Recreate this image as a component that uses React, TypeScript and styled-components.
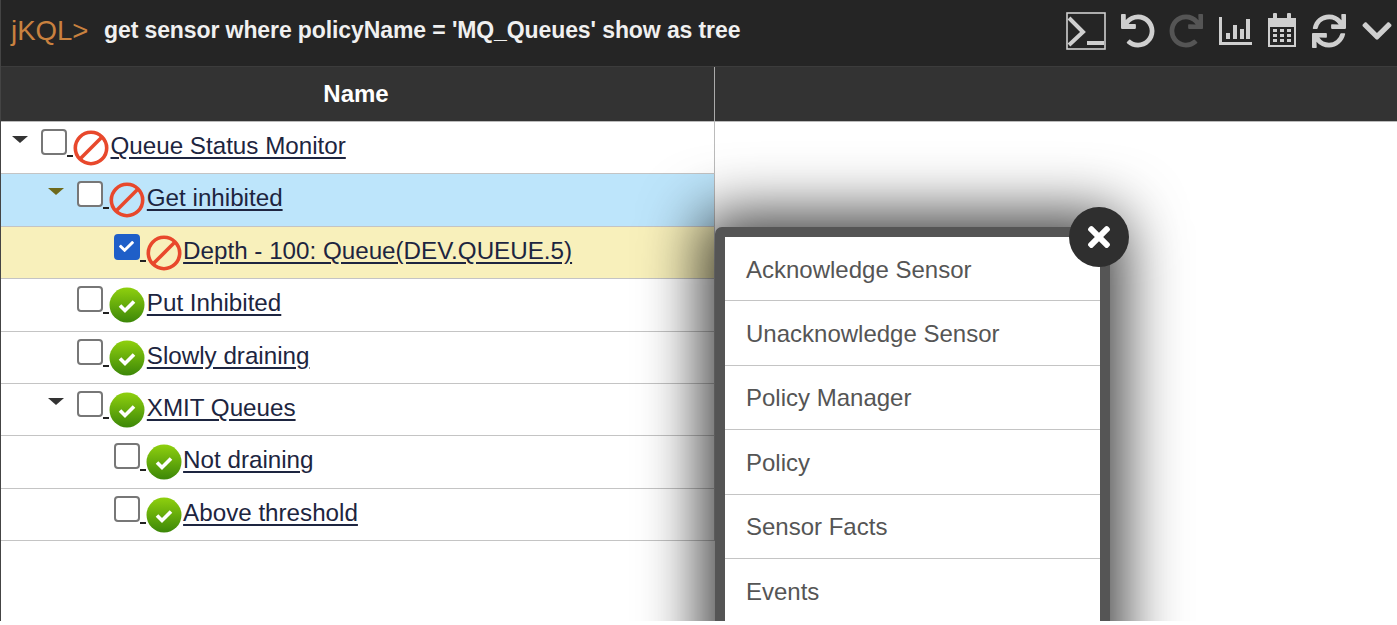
import React from "react";
import styled, { createGlobalStyle } from "styled-components";
import { FaUndo, FaRedo, FaSync, FaChevronDown, FaCheck, FaTimes } from "react-icons/fa";

const GlobalStyle = createGlobalStyle`
  html, body {
    margin: 0;
    padding: 0;
    background: #fff;
    overflow: hidden;
  }
  * { box-sizing: border-box; }
`;

const Page = styled.div`
  position: relative;
  width: 1397px;
  height: 621px;
  overflow: hidden;
  background: #fff;
  border-left: 1px solid #444;
  font-family: "Liberation Sans", Arial, sans-serif;
`;

const Toolbar = styled.div`
  display: flex;
  align-items: center;
  height: 66px;
  padding: 0 3px 5px 10px;
  background: #252525;
`;

const Prompt = styled.span`
  font-size: 27.6px;
  color: #c9813f;
  width: 93px;
`;

const Query = styled.span`
  flex: 1;
  font-size: 23px;
  font-weight: 700;
  color: #f0f0f0;
  letter-spacing: -0.1px;
`;

const Tools = styled.div`
  display: flex;
  align-items: center;
  gap: 14.5px;
`;

const Tool = styled.span<{ $disabled?: boolean }>`
  display: flex;
  color: ${({ $disabled }) => ($disabled ? "#555" : "#cfcfcf")};
  font-size: 34px;
`;

const HeaderRow = styled.div`
  display: flex;
  height: 56px;
  background: #333;
  border-top: 1px solid #3c3c3c;
  border-bottom: 1px solid #bbb;
`;

const NameHeader = styled.div`
  display: flex;
  align-items: center;
  justify-content: center;
  width: 714px;
  padding: 0 3px 1px 0;
  border-right: 1px solid #aaa;
  font-size: 24px;
  font-weight: 700;
  color: #fff;
`;

const Tree = styled.div`
  width: 714px;
`;

const Row = styled.div<{ $level: number; $state?: "selected" | "checked" }>`
  display: flex;
  align-items: flex-start;
  height: 52.4px;
  padding-top: 7px;
  padding-left: ${({ $level }) => 40 + $level * 36.3}px;
  position: relative;
  background: ${({ $state }) =>
    $state === "selected" ? "#bde5fb" : $state === "checked" ? "#f8f0bb" : "#fff"};
  border-right: 1px solid #bbb;
  border-bottom: 1px solid #c4c4c4;
`;

const Caret = styled.span<{ $level: number; $state?: string }>`
  position: absolute;
  left: ${({ $level }) => 11 + $level * 36.3}px;
  top: 14px;
  width: 0;
  height: 0;
  border-left: 8px solid transparent;
  border-right: 8px solid transparent;
  border-top: 7px solid ${({ $state }) => ($state === "selected" ? "#6e6a1c" : "#333")};
`;

const Check = styled.span<{ $checked?: boolean }>`
  display: flex;
  align-items: center;
  justify-content: center;
  flex: none;
  width: 26px;
  height: 26px;
  border-radius: 4px;
  border: 2px solid ${({ $checked }) => ($checked ? "#1f5fc8" : "#777")};
  background: ${({ $checked }) => ($checked ? "#1f5fc8" : "#fff")};
  color: #fff;
  font-size: 15px;
`;

const Spacer = styled.span`
  flex: none;
  width: 6px;
  height: 2px;
  margin-top: 26px;
  background: #222;
`;

const StatusIcon = styled.svg`
  flex: none;
  width: 36px;
  height: 36px;
  margin-top: 1px;
`;

const SensorLink = styled.a`
  margin: 4px 0 0 1.5px;
  font-size: 24.2px;
  line-height: 26px;
  color: #1d2540;
  text-decoration: underline;
  text-underline-offset: 3px;
`;

const Menu = styled.div`
  position: absolute;
  left: 714px;
  top: 227px;
  width: 395px;
  height: 460px;
  border: 10px solid #555;
  border-radius: 7px;
  background: #fff;
  box-shadow: 0 0 60px 14px rgba(0, 0, 0, 0.75);
`;

const MenuItem = styled.div`
  display: flex;
  align-items: center;
  height: 64.4px;
  padding: 2px 0 0 21px;
  font-size: 24px;
  color: #555;
  border-bottom: 1px solid #c4c4c4;
`;

const CloseButton = styled.span`
  position: absolute;
  left: 1068px;
  top: 207px;
  display: flex;
  align-items: center;
  justify-content: center;
  width: 60px;
  height: 60px;
  border-radius: 50%;
  background: #2f2f2f;
  color: #fff;
  font-size: 32px;
`;

const Terminal = () => (
  <svg width="40" height="38" viewBox="0 0 40 38" fill="none" stroke="#cfcfcf">
    <rect x="1" y="1" width="38" height="36" strokeWidth="1.6" />
    <path d="M3 6 L17 20 L3 33" strokeWidth="4" />
    <rect x="21" y="29" width="17" height="4" fill="#cfcfcf" stroke="none" />
  </svg>
);

const BarChart = () => (
  <svg width="35" height="30" viewBox="0 0 35 30" fill="#cfcfcf">
    <rect x="1" y="1" width="3" height="28" />
    <rect x="1" y="26" width="33" height="3" />
    <rect x="8" y="17" width="4" height="6" />
    <rect x="15" y="9" width="4" height="14" />
    <rect x="22" y="13" width="4" height="10" />
    <rect x="28" y="3" width="4" height="20" />
  </svg>
);

const Calendar = () => (
  <svg width="30" height="35" viewBox="0 0 30 35" fill="#cfcfcf">
    <rect x="6" y="0" width="4" height="6" rx="1" />
    <rect x="20" y="0" width="4" height="6" rx="1" />
    <path fillRule="evenodd" d="M1 5h28v29H1z M3 14v18h24V14z" />
    <path d="M6 16h4v3H6zM13 16h4v3h-4zM20 16h4v3h-4zM6 21h4v3H6zM13 21h4v3h-4zM20 21h4v3h-4zM6 26h4v3H6zM13 26h4v3h-4zM20 26h4v3h-4z" />
  </svg>
);

const Inhibited = () => (
  <StatusIcon viewBox="0 0 36 36" fill="none" stroke="#e8482c" strokeWidth="3.6">
    <circle cx="18" cy="18" r="15.7" />
    <path d="M7 29 L29 7" />
  </StatusIcon>
);

const Ok = () => (
  <StatusIcon viewBox="0 0 36 36">
    <defs>
      <linearGradient id="okGrad" x1="0" y1="0" x2="0" y2="1">
        <stop offset="0" stopColor="#8fd00e" />
        <stop offset="1" stopColor="#3c8708" />
      </linearGradient>
    </defs>
    <circle cx="18" cy="18" r="17.5" fill="url(#okGrad)" />
    <path d="M11 18.5 L16 23.5 L25 14.5" fill="none" stroke="#fff" strokeWidth="3.6" />
  </StatusIcon>
);

type Sensor = {
  name: string;
  level: number;
  ok: boolean;
  open?: boolean;
  checked?: boolean;
  state?: "selected" | "checked";
};

const sensors: Sensor[] = [
  { name: "Queue Status Monitor", level: 0, ok: false, open: true },
  { name: "Get inhibited", level: 1, ok: false, open: true, state: "selected" },
  { name: "Depth - 100: Queue(DEV.QUEUE.5)", level: 2, ok: false, checked: true, state: "checked" },
  { name: "Put Inhibited", level: 1, ok: true },
  { name: "Slowly draining", level: 1, ok: true },
  { name: "XMIT Queues", level: 1, ok: true, open: true },
  { name: "Not draining", level: 2, ok: true },
  { name: "Above threshold", level: 2, ok: true },
];

const menuItems = [
  "Acknowledge Sensor",
  "Unacknowledge Sensor",
  "Policy Manager",
  "Policy",
  "Sensor Facts",
  "Events",
];

export default function App() {
  return (
    <Page>
      <GlobalStyle />
      <Toolbar>
        <Prompt>jKQL&gt;</Prompt>
        <Query>get sensor where policyName = 'MQ_Queues' show as tree</Query>
        <Tools>
          <Tool><Terminal /></Tool>
          <Tool><FaUndo /></Tool>
          <Tool $disabled><FaRedo /></Tool>
          <Tool><BarChart /></Tool>
          <Tool><Calendar /></Tool>
          <Tool><FaSync /></Tool>
          <Tool><FaChevronDown /></Tool>
        </Tools>
      </Toolbar>
      <HeaderRow>
        <NameHeader>Name</NameHeader>
      </HeaderRow>
      <Tree>
        {sensors.map((s) => (
          <Row key={s.name} $level={s.level} $state={s.state}>
            {s.open && <Caret $level={s.level} $state={s.state} />}
            <Check $checked={s.checked}>{s.checked && <FaCheck />}</Check>
            <Spacer />
            {s.ok ? <Ok /> : <Inhibited />}
            <SensorLink>{s.name}</SensorLink>
          </Row>
        ))}
      </Tree>
      <Menu>
        {menuItems.map((item) => (
          <MenuItem key={item}>{item}</MenuItem>
        ))}
      </Menu>
      <CloseButton><FaTimes /></CloseButton>
    </Page>
  );
}
